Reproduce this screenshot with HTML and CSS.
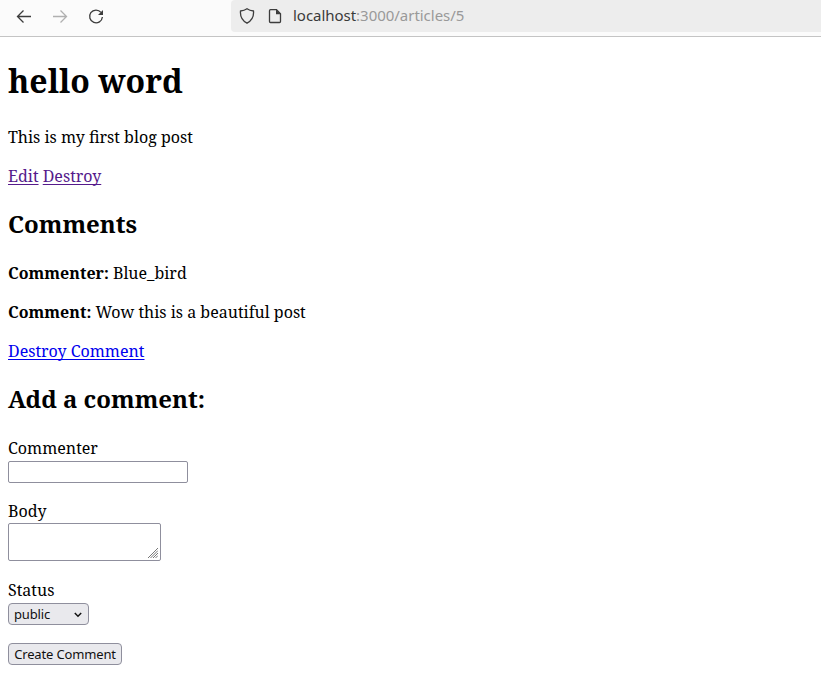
FILE: index.html
```html
<!DOCTYPE html>
<html lang="en">
<head>
<meta charset="utf-8">
<title>Blog</title>
<link rel="stylesheet" href="styles.css">
</head>
<body>
<header class="toolbar">
  <nav class="nav-buttons">
    <svg class="icon" viewBox="0 0 16 16"><path d="M15 7.500H1.500M7.500 1.500l-6 6 6 6"/></svg>
    <svg class="icon disabled" viewBox="0 0 16 16"><path d="M1 7.500h13.500M8.500 1.500l6 6-6 6"/></svg>
    <svg class="icon" viewBox="0 0 16 16"><path d="M13 3.400A6.400 6.400 0 1 0 14.400 8"/><path class="solid" d="M15 1v5h-5z"/></svg>
  </nav>
  <div class="address">
    <svg class="icon" viewBox="0 0 16 16"><path d="M8 .8c1.800 1.300 4 2 6.500 2.200.5 5.600-1.500 9.600-6.500 12.200C3 12.600 1 8.600 1.500 3 4 2.800 6.200 2.100 8 .8z"/></svg>
    <svg class="icon" viewBox="0 0 16 16"><path d="M3.500 1.700h6l4 4v7.800a1 1 0 0 1-1 1h-9a1 1 0 0 1-1-1V2.700a1 1 0 0 1 1-1z"/><path class="solid" d="M9 1.500l4.800 4.800H9z"/></svg>
    <span class="url"><b>localhost</b>:3000/articles/5</span>
  </div>
</header>
<main class="page">
  <h1>hello word</h1>
  <p>This is my first blog post</p>
  <p><a class="visited" href="#">Edit</a> <a class="visited" href="#">Destroy</a></p>
  <h2>Comments</h2>
  <p><strong>Commenter:</strong> Blue_bird</p>
  <p><strong>Comment:</strong> Wow this is a beautiful post</p>
  <p><a href="#">Destroy Comment</a></p>
  <h2>Add a comment:</h2>
  <form>
    <div class="field">
      <label for="commenter">Commenter</label>
      <input id="commenter" class="control text-input" type="text">
    </div>
    <div class="field body-field">
      <label for="body">Body</label>
      <div class="area-wrap">
        <textarea id="body" class="control area"></textarea>
        <svg class="grip" viewBox="0 0 10 10"><path d="M0 10L10 0M2.500 10L10 2.500M5 10l5-5M7.500 10L10 7.500"/></svg>
      </div>
    </div>
    <div class="field status-field">
      <label for="status">Status</label>
      <div class="select-wrap">
        <select id="status" class="control select"><option>public</option></select>
        <svg class="chevron" viewBox="0 0 8 6"><path d="M.8 1L4 4.200 7.200 1"/></svg>
      </div>
    </div>
    <button class="control button" type="button">Create Comment</button>
  </form>
</main>
</body>
</html>
```
FILE: styles.css
```css
body { margin: 0; background: #fff; color: #000; font: 16px/22px "Noto Serif", "Liberation Serif", serif; }
.toolbar { box-sizing: border-box; height: 37px; display: flex; background: #fbfbfb; border-bottom: 1px solid #c4c4c4; }
.nav-buttons { box-sizing: border-box; display: flex; gap: 20px; width: 231px; padding: 9px 0 0 16px; }
.icon { width: 16px; height: 16px; fill: none; stroke: #3c3c3c; stroke-width: 1.3; }
.icon .solid { fill: #3c3c3c; stroke: none; }
.icon.disabled { stroke: #b0b0b0; }
.address { flex: 1; height: 32px; display: flex; align-items: center; gap: 12px; padding-left: 8px; background: #ededed; border-radius: 4px 0 0 4px; }
.url { margin: -2px 0 0 -2px; font: 15px "Noto Sans", sans-serif; letter-spacing: -0.03px; color: #999; }
.url b { font-weight: 400; color: #3a3a3a; }
.page { padding: 22px 8px 0; }
h1 { font-size: 32px; line-height: 44px; margin: 0 0 23px; }
p { margin: 0 0 17px; }
h2 { font-size: 24px; line-height: 33px; margin: 20px 0 22px; }
a { color: #00e; text-underline-offset: 2px; text-decoration-skip-ink: none; text-decoration-thickness: 1px; }
a.visited { color: #551a8b; }
label { display: block; }
.field { height: 63px; }
.body-field { height: 79px; }
.status-field { height: 64px; }
.control { display: block; box-sizing: border-box; margin: 0; border: 1px solid #8f8f9d; border-radius: 2px; background: #fff; color: #111; font: 13.333px/18px "Noto Sans", sans-serif; }
.text-input { width: 180px; height: 22px; margin-top: 2px; }
.area-wrap { position: relative; width: 153px; margin-top: 1px; }
.area { width: 153px; height: 38px; resize: none; }
.grip { position: absolute; right: 3px; bottom: 3px; width: 10px; height: 10px; fill: none; stroke: #777; stroke-width: 1; }
.select-wrap { position: relative; width: 81px; margin-top: 2px; }
.select { appearance: none; width: 81px; height: 22px; padding: 0 5px; background: #e9e9ed; border-radius: 4px; font-size: 13px; letter-spacing: -0.15px; }
.chevron { position: absolute; right: 7px; top: 9px; width: 8px; height: 6px; fill: none; stroke: #111; stroke-width: 1.5; }
.button { width: 114px; height: 22px; padding: 0; background: #e9e9ed; border-radius: 4px; font-size: 13px; letter-spacing: -0.15px; white-space: nowrap; }
```
